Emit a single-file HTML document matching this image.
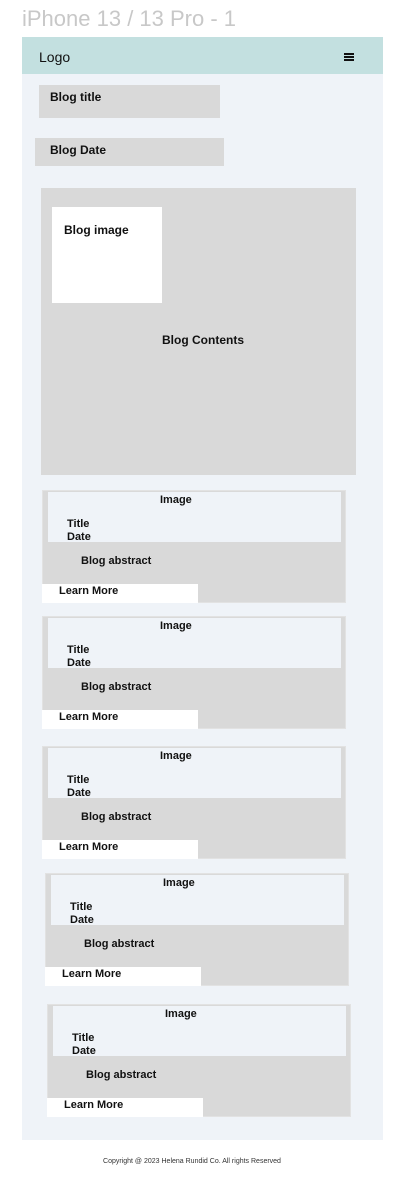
<!DOCTYPE html>
<html><head><meta charset="utf-8"><style>
*{margin:0;padding:0;box-sizing:border-box}
body{width:414px;height:1192px;background:#fff;font-family:"Liberation Sans",sans-serif;position:relative;overflow:hidden;color:#111}
.a{position:absolute}
.b{font-weight:bold;font-size:12px}
.card{position:absolute;width:304px;height:113px;background:#d9d9d9;border:1px solid #e2e2e2}
.card .img{position:absolute;left:5px;top:1px;width:293px;height:50px;background:#eff3f8}
.card .lm{position:absolute;left:-1px;top:93px;width:156px;height:19px;background:#fff}
</style></head><body>
<div class="a" style="left:22px;top:6px;font-size:22px;color:#c8c8c8">iPhone 13 / 13 Pro - 1</div>
<div class="a" style="left:22px;top:37px;width:361px;height:1103px;background:#eff3f8"></div>
<div class="a" style="left:22px;top:37px;width:361px;height:37px;background:#c3e0e0"></div>
<div class="a" style="left:39px;top:49px;font-size:14px">Logo</div>
<div class="a" style="left:344px;top:53px;width:10px;height:2px;background:#111;box-shadow:0 3px 0 #111,0 6px 0 #111"></div>
<div class="a" style="left:39px;top:85px;width:181px;height:33px;background:#d9d9d9"></div>
<div class="a b" style="left:50px;top:90px">Blog title</div>
<div class="a" style="left:35px;top:138px;width:189px;height:28px;background:#d9d9d9"></div>
<div class="a b" style="left:50px;top:143px">Blog Date</div>
<div class="a" style="left:41px;top:188px;width:315px;height:287px;background:#d9d9d9"></div>
<div class="a" style="left:52px;top:207px;width:110px;height:96px;background:#fff"></div>
<div class="a b" style="left:64px;top:223px">Blog image</div>
<div class="a b" style="left:162px;top:333px">Blog Contents</div>

<div class="card" style="left:42px;top:490px"><div class="img"></div><div class="lm"></div>
<div class="a b" style="left:117px;top:3px;font-size:11px">Image</div>
<div class="a b" style="left:24px;top:27px;font-size:11px;line-height:13px">Title<br>Date</div>
<div class="a b" style="left:38px;top:64px;font-size:11px">Blog abstract</div>
<div class="a b" style="left:16px;top:94px;font-size:11px">Learn More</div></div>

<div class="card" style="left:42px;top:616px"><div class="img"></div><div class="lm"></div>
<div class="a b" style="left:117px;top:3px;font-size:11px">Image</div>
<div class="a b" style="left:24px;top:27px;font-size:11px;line-height:13px">Title<br>Date</div>
<div class="a b" style="left:38px;top:64px;font-size:11px">Blog abstract</div>
<div class="a b" style="left:16px;top:94px;font-size:11px">Learn More</div></div>

<div class="card" style="left:42px;top:746px"><div class="img"></div><div class="lm"></div>
<div class="a b" style="left:117px;top:3px;font-size:11px">Image</div>
<div class="a b" style="left:24px;top:27px;font-size:11px;line-height:13px">Title<br>Date</div>
<div class="a b" style="left:38px;top:64px;font-size:11px">Blog abstract</div>
<div class="a b" style="left:16px;top:94px;font-size:11px">Learn More</div></div>

<div class="card" style="left:45px;top:873px"><div class="img"></div><div class="lm"></div>
<div class="a b" style="left:117px;top:3px;font-size:11px">Image</div>
<div class="a b" style="left:24px;top:27px;font-size:11px;line-height:13px">Title<br>Date</div>
<div class="a b" style="left:38px;top:64px;font-size:11px">Blog abstract</div>
<div class="a b" style="left:16px;top:94px;font-size:11px">Learn More</div></div>

<div class="card" style="left:47px;top:1004px"><div class="img"></div><div class="lm"></div>
<div class="a b" style="left:117px;top:3px;font-size:11px">Image</div>
<div class="a b" style="left:24px;top:27px;font-size:11px;line-height:13px">Title<br>Date</div>
<div class="a b" style="left:38px;top:64px;font-size:11px">Blog abstract</div>
<div class="a b" style="left:16px;top:94px;font-size:11px">Learn More</div></div>

<div class="a" style="left:0;width:384px;top:1158px;text-align:center;font-size:7px;color:#333">Copyright @ 2023 Helena Rundid Co. All rights Reserved</div>
</body></html>
